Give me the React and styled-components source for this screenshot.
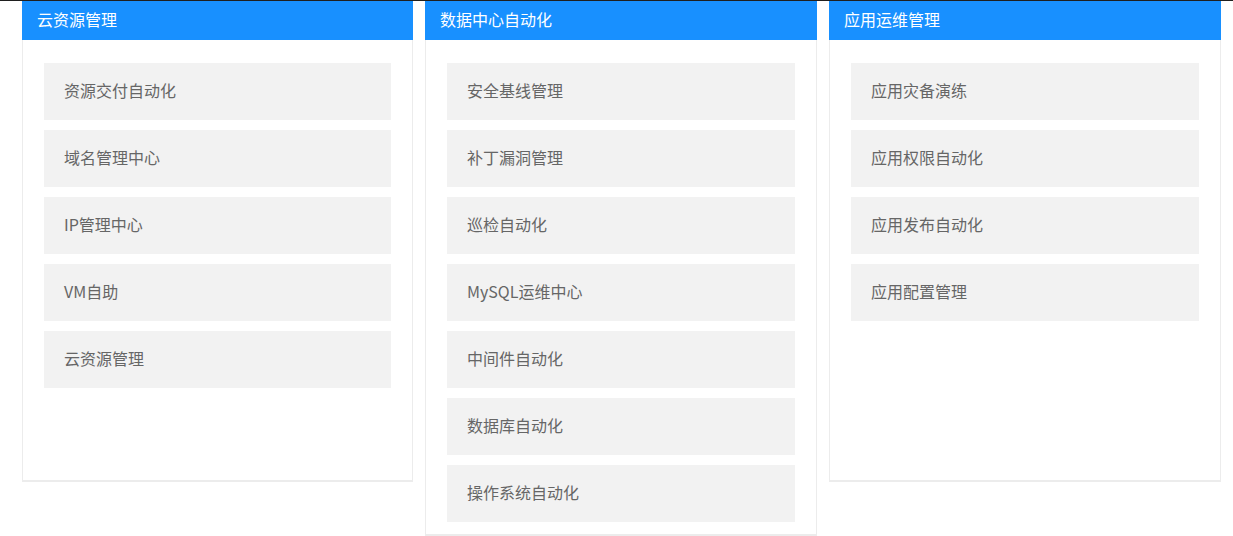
import React from 'react';
import styled, { createGlobalStyle } from 'styled-components';

const GlobalStyle = createGlobalStyle`
    html, body {
        margin: 0;
        padding: 0;
        background: #FFFFFF;
        font-family: "Microsoft YaHei", "Noto Sans CJK SC", "Noto Sans", sans-serif;
    }
`

const Page = styled.div`
    border-top: 1px solid #1f1f1f;
    padding: 0 12px 0 22px;
    display: grid;
    grid-template-columns: 391px 392px 392px;
    column-gap: 12px;
    align-items: start;
`

const Card = styled.div`
    display: flex;
    flex-direction: column;
`

const CardHeader = styled.div`
    height: 39px;
    box-sizing: border-box;
    padding: 0 0 3px 15px;
    display: flex;
    align-items: center;
    background-color: #1890ff;
    color: #FFFFFF;
    font-size: 16px;
`

const CardBody = styled.div`
    min-height: 405px;
    padding: 23px 21px 12px;
    border: 1px solid #ececec;
    border-top: none;
    border-bottom-width: 2px;
    display: flex;
    flex-direction: column;
    gap: 10px;
`

const Item = styled.div`
    height: 57px;
    box-sizing: border-box;
    display: flex;
    align-items: center;
    padding: 0 0 3px 20px;
    background-color: #f2f2f2;
    color: #666666;
    font-size: 16px;
    cursor: pointer;
`

const groups = [
    {
        title: '云资源管理',
        items: ['资源交付自动化', '域名管理中心', 'IP管理中心', 'VM自助', '云资源管理'],
    },
    {
        title: '数据中心自动化',
        items: ['安全基线管理', '补丁漏洞管理', '巡检自动化', 'MySQL运维中心', '中间件自动化', '数据库自动化', '操作系统自动化'],
    },
    {
        title: '应用运维管理',
        items: ['应用灾备演练', '应用权限自动化', '应用发布自动化', '应用配置管理'],
    },
];

const App = () => {
    return (
        <>
            <GlobalStyle />
            <Page>
                {groups.map((group) => (
                    <Card key={group.title}>
                        <CardHeader>{group.title}</CardHeader>
                        <CardBody>
                            {group.items.map((item) => (
                                <Item key={item}>{item}</Item>
                            ))}
                        </CardBody>
                    </Card>
                ))}
            </Page>
        </>
    );
};

export default App;
